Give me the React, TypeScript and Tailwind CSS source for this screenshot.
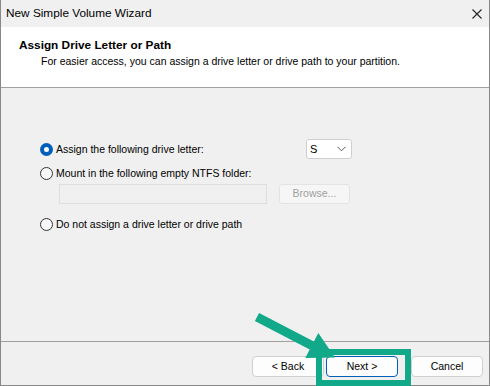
import React from "react";

const font = { fontFamily: '"Segoe UI", "Liberation Sans", Arial, sans-serif' };

function Radio({ checked }: { checked?: boolean }) {
  if (checked) {
    return (
      <span className="flex h-[13px] w-[13px] shrink-0 items-center justify-center rounded-full bg-[#005fb8]">
        <span className="h-[5px] w-[5px] rounded-full bg-white" />
      </span>
    );
  }
  return <span className="h-[13px] w-[13px] shrink-0 rounded-full border border-[#333333] bg-[#f7f7f7]" />;
}

export default function App() {
  return (
    <div
      className="relative flex h-[386px] w-[490px] flex-col border-x border-b border-[#888888] bg-[#f0f0f0] text-[10.5px] text-black"
      style={font}
    >
      {/* Title bar */}
      <div className="flex h-[27px] items-center justify-between pl-[5px] pr-[6px]">
        <span className="text-[11.8px] leading-none">New Simple Volume Wizard</span>
        <svg width="10" height="10" viewBox="0 0 10 10" className="mr-[1px]">
          <path d="M0.5 0.5 L9.5 9.5 M9.5 0.5 L0.5 9.5" stroke="#222" strokeWidth="1.1" />
        </svg>
      </div>

      {/* Header */}
      <div className="flex h-[61px] flex-col border-b border-[#a0a0a0] bg-white pt-[10px]">
        <div className="pl-[18px] text-[11.8px] font-bold leading-[16px]">Assign Drive Letter or Path</div>
        <div className="pl-[40px] text-[10.5px] leading-[16px]">
          For easier access, you can assign a drive letter or drive path to your partition.
        </div>
      </div>

      {/* Body */}
      <div className="flex h-[254px] flex-col border-b border-[#a0a0a0] pl-[39px] pt-[51px]">
        <div className="flex w-[312px] items-center justify-between">
          <div className="flex items-center gap-[3px]">
            <Radio checked />
            <span className="leading-none">Assign the following drive letter:</span>
          </div>
          <div className="flex h-[20px] w-[46px] items-center justify-between rounded-[3px] border border-[#cfcfcf] bg-white pl-[3px] pr-[5px]">
            <span className="text-[11px] leading-none">S</span>
            <svg width="9" height="6" viewBox="0 0 9 6">
              <path d="M0.5 0.8 L4.5 4.8 L8.5 0.8" fill="none" stroke="#555" strokeWidth="1" />
            </svg>
          </div>
        </div>
        <div className="mt-[6px] flex h-[16px] items-center gap-[3px]">
          <Radio />
          <span className="leading-none">Mount in the following empty NTFS folder:</span>
        </div>
        <div className="mt-[3px] flex items-center pl-[19px]">
          <div className="h-[20px] w-[208px] border border-[#dedede] bg-[#f0f0f0]" />
          <div className="ml-[12px] flex h-[20px] w-[71px] items-center justify-center rounded-[3px] border border-[#e3e3e3] bg-[#f6f6f6] text-[#a0a0a0]">
            Browse...
          </div>
        </div>
        <div className="mt-[12px] flex h-[16px] items-center gap-[3px]">
          <Radio />
          <span className="leading-none">Do not assign a drive letter or drive path</span>
        </div>
      </div>

      {/* Footer */}
      <div className="flex flex-1 items-start justify-end pr-[6px] pt-[14px]">
        <div className="flex h-[21px] w-[72px] items-center justify-center rounded-[4px] border border-[#d0d0d0] bg-[#fdfdfd]">
          &lt; Back
        </div>
        <div className="ml-[2px] flex h-[21px] w-[72px] items-center justify-center rounded-[4px] border border-[#005fb8] bg-[#fdfdfd]">
          Next &gt;
        </div>
        <div className="ml-[13px] flex h-[21px] w-[72px] items-center justify-center rounded-[4px] border border-[#d0d0d0] bg-[#fdfdfd]">
          Cancel
        </div>
      </div>

      {/* Annotation overlay */}
      <div className="absolute left-[315px] top-[349px] h-[37px] w-[95px] border-[6px] border-[#12a88a]" />
      <svg className="absolute left-0 top-0" width="490" height="386" viewBox="0 0 490 386">
        <polygon
          points="253.9,321 258.1,313 312.9,341.5 317.3,333.1 334,357.5 304.3,357.9 308.7,349.5"
          fill="#12a88a"
        />
      </svg>
    </div>
  );
}
